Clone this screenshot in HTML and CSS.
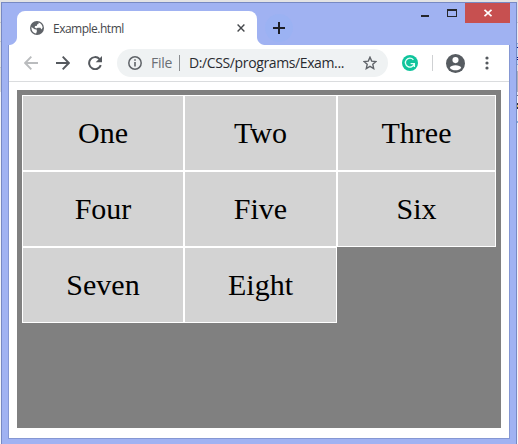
FILE: index.html
```html
<!DOCTYPE html>
<html lang="en">
<head>
<meta charset="utf-8">
<title>Example.html</title>
<link rel="stylesheet" href="styles.css">
</head>
<body>
<div class="window">
  <header class="titlebar">
    <div class="tab">
      <svg class="globe" width="14" height="14" viewBox="0 0 14 14"><circle cx="7" cy="7" r="7" fill="#5f6368"/><path d="M1.5 6.1 4.6 8.3 6.6 8.5 6.9 10.2 6.1 12.6C3.2 12.2 1.2 9.6 1.5 6.1ZM8.6 1.5C11 2.2 12.6 4.4 12.6 6.8L11.4 8.4 10.4 6.8H7.7L6.2 7.4 4.5 6.3 5.2 5.1 7 4.8V3.4L8.5 3Z" fill="#fff"/></svg>
      <span class="tab-title">Example.html</span>
      <svg class="tab-close" width="8" height="8" viewBox="0 0 8 8"><path d="M.6.6 7.4 7.4M7.4.6.6 7.4" stroke="#45484c" stroke-width="1.4"/></svg>
    </div>
    <div class="new-tab"><svg width="12" height="12" viewBox="0 0 12 12"><path d="M6 0V12M0 6H12" stroke="#1c1e26" stroke-width="2"/></svg></div>
    <div class="controls">
      <span class="minimize"></span>
      <span class="maximize"></span>
      <span class="close"><svg width="8" height="8" viewBox="0 0 8 8"><path d="M.5.8 7.5 7.2M7.5.8.5 7.2" stroke="#fff" stroke-width="1.8"/></svg></span>
    </div>
  </header>
  <main class="client">
    <nav class="toolbar">
      <svg class="arrow" width="14" height="14" viewBox="0 0 14 14"><path d="M14 7H1.5M7.3.7 1.2 7 7.3 13.3" fill="none" stroke="#babcbe" stroke-width="1.9"/></svg>
      <svg class="arrow" width="14" height="14" viewBox="0 0 14 14"><path d="M0 7H12.5M6.7.7 12.8 7 6.7 13.3" fill="none" stroke="#55595e" stroke-width="1.9"/></svg>
      <svg class="reload" width="14" height="14" viewBox="0 0 14 14"><path d="M12.8 9.1A6 6 0 1 1 11.5 3" fill="none" stroke="#55595e" stroke-width="2"/><path d="M14 0V6.3H7.7Z" fill="#55595e"/></svg>
      <div class="address">
        <svg width="14" height="14" viewBox="0 0 14 14"><circle cx="7" cy="7" r="6.2" fill="none" stroke="#5f6368" stroke-width="1.5"/><path d="M7 3.2V4.8M7 6V10.6" stroke="#5f6368" stroke-width="1.6"/></svg>
        <span class="scheme">File</span>
        <span class="path">D:/CSS/programs/Exam...</span>
        <svg class="star" width="14" height="14" viewBox="0 0 14 14"><path d="M7 1.2 8.7 5.1 13 5.5 9.8 8.3 10.7 12.6 7 10.4 3.3 12.6 4.2 8.3 1 5.5 5.3 5.1Z" fill="none" stroke="#5f6368" stroke-width="1.4"/></svg>
      </div>
      <svg class="extension" width="16" height="16" viewBox="0 0 16 16"><circle cx="8" cy="8" r="8" fill="#0fc49c"/><path d="M11.4 4.8A4.5 4.5 0 1 0 12.3 8.6H8.6M12.4 8.6V12" fill="none" stroke="#e5fff7" stroke-width="1.3"/></svg>
      <span class="divider"></span>
      <svg class="profile" width="19" height="19" viewBox="0 0 18 18"><circle cx="9" cy="9" r="9" fill="#575c61"/><circle cx="9" cy="5.8" r="2.9" fill="#fff"/><path d="M3.6 13C4 9.8 14 9.8 14.4 13 12 16.3 6 16.3 3.6 13Z" fill="#fff"/></svg>
      <svg class="menu" width="4" height="14" viewBox="0 0 4 14"><g fill="#55595e"><circle cx="2" cy="2" r="1.6"/><circle cx="2" cy="7" r="1.6"/><circle cx="2" cy="12" r="1.6"/></g></svg>
    </nav>
    <section class="page">
      <div class="grid-container">
        <div class="item">One</div><div class="item">Two</div><div class="item">Three</div>
        <div class="item">Four</div><div class="item">Five</div><div class="item">Six</div>
        <div class="item">Seven</div><div class="item">Eight</div>
      </div>
    </section>
  </main>
</div>
</body>
</html>
```
FILE: styles.css
```css
* { box-sizing: border-box; }
body {
  margin: 0;
  height: 444px;
  overflow: hidden;
  padding: 2px 1px 0;
  /* strips of the desktop left visible beside the window */
  background:
    linear-gradient(#e3e3e4 22px, #c8c8ca 22px 23px, #e9eaf0 23px 43px, #84a8d8 43px 44px, #c4daf5 44px 47px, #101c8c 47px 48px, #c4daf5 48px 57px, #101c8c 57px 58px, #c4daf5 58px 59px, #101c8c 59px 60px, #c4daf5 60px 64px, #84a8d8 64px 65px, #e3e3e4 65px 71px, #b2b2b6 71px 92px, #e9eaf0 92px 95px, #77777c 95px 96px, #f0f0f5 96px 103px, #33343c 103px 105px, #d8c070 105px 107px, #33343c 107px 109px, #f0f0f5 109px 121px, #88b4dc 121px 123px, #f4f5f9 123px) right / 1px 100% no-repeat,
    linear-gradient(#e3e3e4 22px, #c8c8ca 22px 23px, #e3e3e4 23px 41px, #c8c8ca 41px 42px, #e3e3e4 42px 67px, #c8c8ca 67px 68px, #dcdcdd 68px 92px, #f4f5f9 92px) left / 1px 100% no-repeat,
    #e3e3e4;
  font-family: "Open Sans", "Noto Sans", sans-serif;
}
svg { display: block; flex: none; }
.window {
  width: 516px;
  height: 442px;
  border: 1px solid #7789c3;
  border-bottom: 0;
  background: #a0b2f2;
}
.titlebar {
  display: flex;
  height: 42px;
  padding-left: 15px;
}
.tab {
  position: relative;
  display: flex;
  align-items: center;
  width: 240px;
  height: 34px;
  margin-top: 8px;
  padding: 0 12px 0 13px;
  border-radius: 8px 8px 0 0;
  background: #fff;
}
.tab::before, .tab::after {
  content: "";
  position: absolute;
  bottom: 0;
  width: 8px;
  height: 8px;
}
.tab::before { left: -8px; background: radial-gradient(circle at 0 0, transparent 7.5px, #fff 8.5px); }
.tab::after { right: -8px; background: radial-gradient(circle at 100% 0, transparent 7.5px, #fff 8.5px); }
.tab-title {
  margin-left: 9px;
  color: #45484c;
  font-size: 12px;
  letter-spacing: -0.5px;
  white-space: nowrap;
}
.tab-close { margin-left: auto; }
.new-tab {
  display: flex;
  align-items: center;
  justify-content: center;
  width: 28px;
  height: 28px;
  margin: 11px 0 0 8px;
  border-radius: 50%;
  background: #9bb2f3;
}
.controls {
  display: flex;
  margin-left: auto;
  padding-right: 6px;
}
.minimize { width: 8px; height: 2px; margin-top: 12px; background: #25262b; }
.maximize {
  width: 10px;
  height: 8px;
  margin: 6px 8px 0 18px;
  border: 1px solid #25262b;
  border-top-width: 2px;
}
.close {
  display: flex;
  align-items: center;
  justify-content: center;
  width: 45px;
  height: 20px;
  background: #c75050;
}
.client {
  width: 502px;
  height: 394px;
  margin-left: 6px;
  border: 1px solid #8597d3;
  border-top: 0;
  background: #fff;
}
.toolbar {
  display: flex;
  align-items: center;
  height: 37px;
  padding-left: 15px;
  border-bottom: 1px solid #dadcde;
}
.arrow { margin-right: 18px; }
.address {
  display: flex;
  align-items: center;
  width: 271px;
  height: 28px;
  margin-left: 15px;
  padding: 0 11px;
  border-radius: 14px;
  background: #eff2f3;
  font-size: 14px;
  line-height: 16px;
  white-space: nowrap;
}
.scheme {
  width: 29px;
  margin-left: 9px;
  border-right: 1px solid #8a8d90;
  color: #6a6e73;
  letter-spacing: -0.3px;
}
.path { margin-left: 9px; color: #292b30; letter-spacing: -0.38px; }
.star { margin-left: auto; }
.extension { margin-left: 14px; }
.divider { width: 1px; height: 16px; margin-left: 14px; background: #cfd1d3; }
.profile { margin-left: 13px; }
.menu { margin-left: 20px; }
.page { padding: 8px; }
.grid-container {
  display: grid;
  grid-template-columns: 162px 153px 159px;
  align-content: start;
  width: 484px;
  height: 338px;
  padding: 5px;
  background: #808080;
}
.item {
  padding: 20px;
  border: 1px solid #fff;
  background: #d3d3d3;
  color: #000;
  font: 30px/34px "Liberation Serif", serif;
  text-align: center;
}
```
